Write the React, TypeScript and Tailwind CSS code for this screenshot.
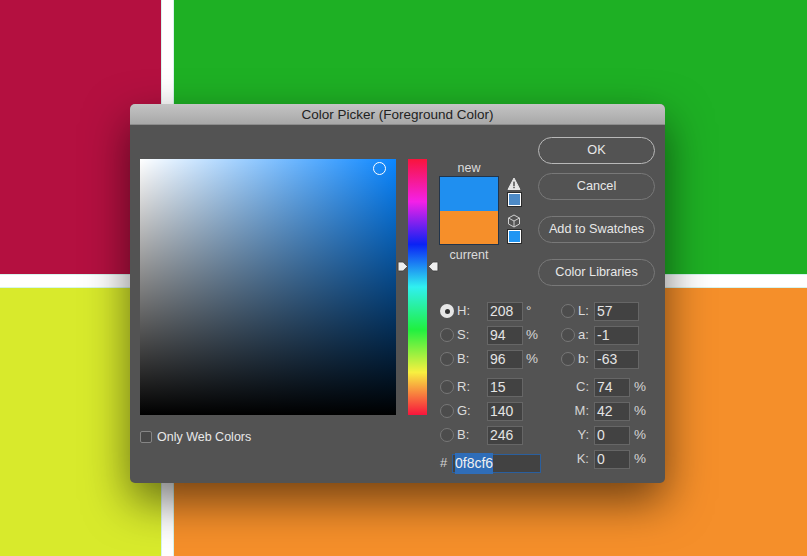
import React from "react";

const font = "[font-family:'Liberation_Sans',Arial,sans-serif]";

function Radio({ on = false }: { on?: boolean }) {
  return on ? (
    <span className="flex h-[14px] w-[14px] shrink-0 items-center justify-center rounded-full bg-[#e6e6e6]">
      <span className="h-[5px] w-[5px] rounded-full bg-[#333333]" />
    </span>
  ) : (
    <span className="h-[14px] w-[14px] shrink-0 rounded-full border border-[#777777] bg-[#4c4c4c]" />
  );
}

function Field({ value, w = "w-[36px]" }: { value: string; w?: string }) {
  return (
    <span className={`flex h-[19px] items-center border border-[#666666] bg-[#424242] pl-[2px] text-[14px] text-[#e4e4e4] ${w}`}>
      {value}
    </span>
  );
}

function LeftRow({ label, value, unit, on }: { label: string; value: string; unit?: string; on?: boolean }) {
  return (
    <div className="flex h-[24px] items-center">
      <Radio on={on} />
      <span className="ml-[3px] w-[30px] text-[13px] text-[#dcdcdc]">{label}</span>
      <Field value={value} />
      {unit && <span className="ml-[3px] text-[13.5px] text-[#d4d4d4]">{unit}</span>}
    </div>
  );
}

function LabRow({ label, value }: { label: string; value: string }) {
  return (
    <div className="flex h-[24px] items-center">
      <Radio />
      <span className="ml-[3px] w-[16px] text-[13px] text-[#dcdcdc]">{label}</span>
      <Field value={value} w="w-[45px]" />
    </div>
  );
}

function CmykRow({ label, value }: { label: string; value: string }) {
  return (
    <div className="flex h-[24px] items-center">
      <span className="w-[28px] pr-[5px] text-right text-[13px] text-[#d4d4d4]">{label}</span>
      <Field value={value} />
      <span className="ml-[4px] text-[13.5px] text-[#d4d4d4]">%</span>
    </div>
  );
}

function Btn({ children, primary, className = "" }: { children: React.ReactNode; primary?: boolean; className?: string }) {
  return (
    <div
      className={`flex h-[27px] w-[117px] items-center justify-center rounded-full border text-[12.7px] text-[#e8e8e8] ${
        primary ? "border-[#b8b8b8]" : "border-[#787878]"
      } ${className}`}
    >
      {children}
    </div>
  );
}

function MiniSwatch({ color }: { color: string }) {
  return (
    <div className="h-[13px] w-[13px] border border-white outline outline-1 outline-[#2a2a2a]" style={{ background: color }} />
  );
}

function Pointer({ dir, className }: { dir: "l" | "r"; className: string }) {
  return (
    <svg viewBox="0 0 10 10" className={`absolute h-[11px] w-[11px] ${className}`}>
      {dir === "r" ? (
        <path d="M1 1.5 Q1 1 2 1 H5.5 L9.5 5 L5.5 9 H2 Q1 9 1 8.5 Z" fill="#eeeeee" stroke="#2e2e2e" strokeWidth="0.6" />
      ) : (
        <path d="M9 1.5 Q9 1 8 1 H4.5 L0.5 5 L4.5 9 H8 Q9 9 9 8.5 Z" fill="#eeeeee" stroke="#2e2e2e" strokeWidth="0.6" />
      )}
    </svg>
  );
}

export default function App() {
  return (
    <div className={`relative h-[556px] w-[807px] overflow-hidden bg-white ${font}`}>
      <div className="grid h-full grid-cols-[161px_1fr] grid-rows-[274px_1fr] gap-x-[13px] gap-y-[14px]">
        <div className="bg-[#b41040] outline outline-1 outline-[#d6f5ee]" />
        <div className="bg-[#1eb024] outline outline-1 outline-[#d6f5ee]" />
        <div className="bg-[#d8ea2c] outline outline-1 outline-[#d6f5ee]" />
        <div className="bg-[#f58f2a] outline outline-1 outline-[#d6f5ee]" />
      </div>

      <div className="absolute left-[130px] top-[104px] h-[379px] w-[535px] rounded-[5px] bg-[#535353] shadow-[0_18px_45px_rgba(0,0,0,0.55)]">
        <div className="flex h-[21px] items-center justify-center rounded-t-[5px] border-b border-[#8c8c8c] bg-gradient-to-b from-[#c4c4c4] to-[#a8a8a8] pt-[2px] text-[13.5px] text-[#222222]">
          Color Picker (Foreground Color)
        </div>
        <div className="flex pl-[10px]">
          <div className="w-[256px] pt-[34px]">
            <div className="relative h-[256px] w-[256px] [background:linear-gradient(to_bottom,transparent,#000),linear-gradient(to_right,#fff,#0a86ff)]">
              <span className="absolute left-[233px] top-[3px] h-[13px] w-[13px] rounded-full border border-white" />
            </div>
            <div className="mt-[13px] flex items-center">
              <span className="h-[12px] w-[12px] rounded-[2px] border border-[#858585] bg-[#484848]" />
              <span className="ml-[5px] text-[12.5px] text-[#e8e8e8]">Only Web Colors</span>
            </div>
          </div>

          <div className="relative ml-[12px] mt-[34px] h-[256px] w-[19px] bg-[linear-gradient(to_bottom,#f8143c,#f420e8,#0a22f5,#30f0f0,#20f040,#f8f040,#f8143c)]">
            <Pointer dir="r" className="left-[-11px] top-[102px]" />
            <Pointer dir="l" className="left-[20px] top-[102px]" />
          </div>

          <div className="ml-[12px] w-[226px]">
            <div className="flex h-[174px]">
              <div className="w-[60px] shrink-0">
                <div className="flex h-[51px] items-end justify-center pb-[1px] text-[12.5px] leading-[14px] text-[#dcdcdc]">new</div>
                <div className="h-[69px] border border-[#22344a]">
                  <div className="h-[34px] bg-[#1f8ff0]" />
                  <div className="h-[33px] bg-[#f68f2a]" />
                </div>
                <div className="pt-[3px] text-center text-[12.5px] leading-[14px] text-[#dcdcdc]">current</div>
              </div>
              <div className="ml-[8px] flex w-[14px] shrink-0 flex-col items-center pt-[52px]">
                <svg viewBox="0 0 14 14" className="h-[14px] w-[14px]">
                  <path d="M7 1 L13 12.5 H1 Z" fill="#e6e6e6" stroke="#e6e6e6" strokeLinejoin="round" />
                  <rect x="6.3" y="4.6" width="1.4" height="4.4" fill="#444444" />
                  <rect x="6.3" y="9.7" width="1.4" height="1.5" fill="#444444" />
                </svg>
                <div className="mt-[2px]"><MiniSwatch color="#4d8ac6" /></div>
                <svg viewBox="0 0 14 14" className="mt-[8px] h-[14px] w-[14px]" fill="none" stroke="#cfcfcf" strokeWidth="1">
                  <path d="M7 1 L12.5 4 V10 L7 13 L1.5 10 V4 Z M1.5 4 L7 7 L12.5 4 M7 7 V13" />
                </svg>
                <div className="mt-[2px]"><MiniSwatch color="#2196f3" /></div>
              </div>
              <div className="ml-[17px] flex shrink-0 flex-col pt-[12px]">
                <Btn primary>OK</Btn>
                <Btn className="mt-[9px]">Cancel</Btn>
                <Btn className="mt-[16px]">Add to Swatches</Btn>
                <Btn className="mt-[16px]">Color Libraries</Btn>
              </div>
            </div>

            <div className="flex pl-[1px]">
              <div className="w-[121px] shrink-0">
                <LeftRow label="H:" value="208" unit="°" on />
                <LeftRow label="S:" value="94" unit="%" />
                <LeftRow label="B:" value="96" unit="%" />
                <div className="mt-[4px]">
                  <LeftRow label="R:" value="15" />
                  <LeftRow label="G:" value="140" />
                  <LeftRow label="B:" value="246" />
                </div>
                <div className="mt-[4px] flex h-[24px] items-center">
                  <span className="w-[12px] text-[13px] text-[#d4d4d4]">#</span>
                  <span className="flex h-[19px] w-[89px] items-center border border-[#2a5f9e] bg-[#424242] pl-[2px] text-[14px] text-[#f0f0f0]">
                    <span className="bg-[#2f6db8]">0f8cf6</span>
                  </span>
                </div>
              </div>
              <div className="shrink-0">
                <LabRow label="L:" value="57" />
                <LabRow label="a:" value="-1" />
                <LabRow label="b:" value="-63" />
                <div className="ml-[5px] mt-[4px]">
                  <CmykRow label="C:" value="74" />
                  <CmykRow label="M:" value="42" />
                  <CmykRow label="Y:" value="0" />
                  <CmykRow label="K:" value="0" />
                </div>
              </div>
            </div>
          </div>
        </div>
      </div>
    </div>
  );
}
